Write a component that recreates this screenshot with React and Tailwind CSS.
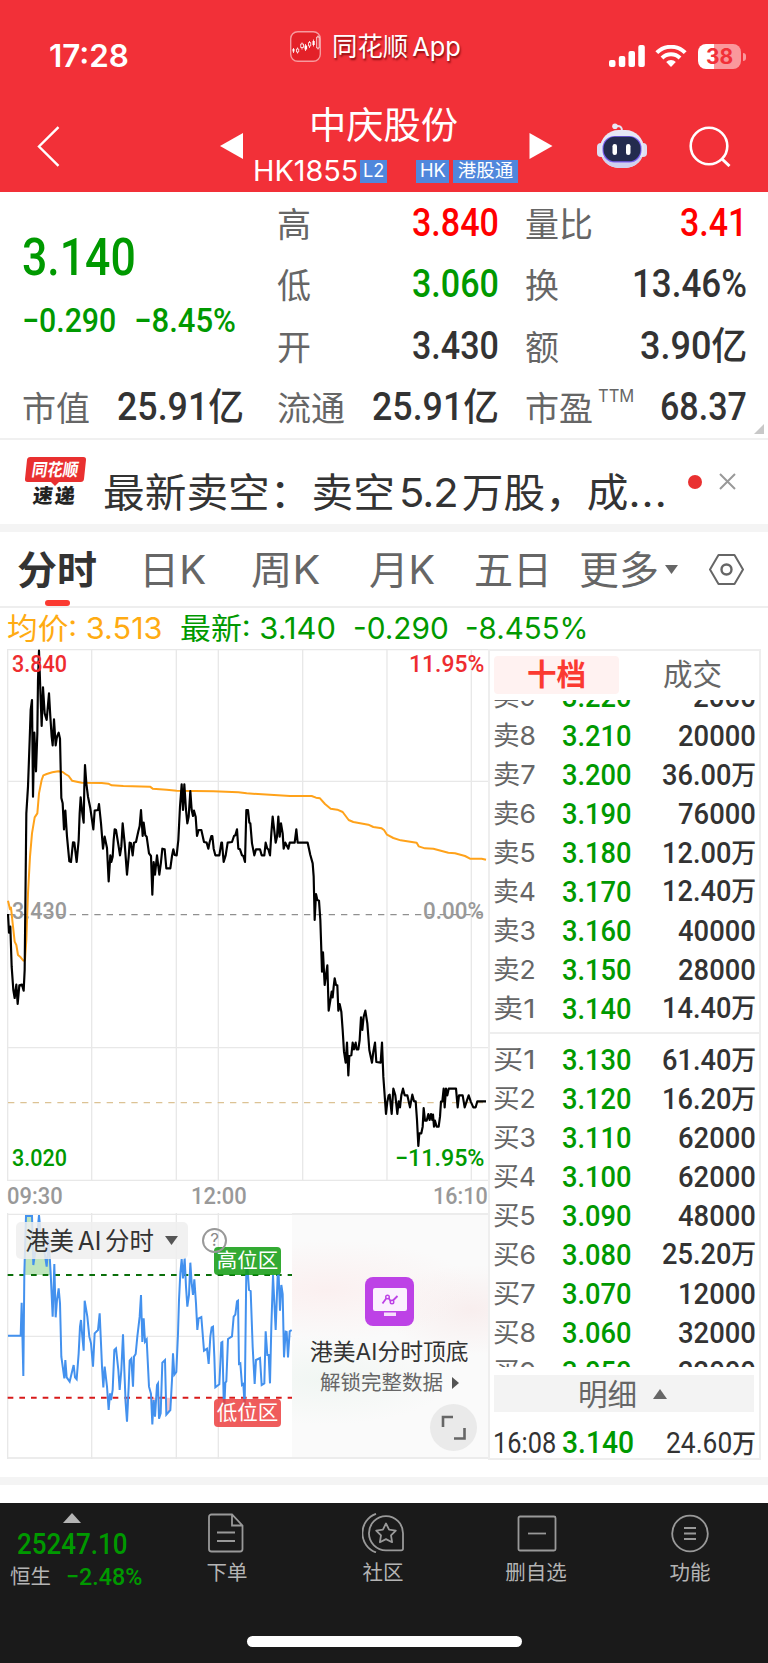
import { useLayoutEffect, useRef, useState } from 'react';

const NUM = "font-['Roboto','Noto_Sans_CJK_SC',sans-serif]";
const UI = "font-['Inter','Noto_Sans_CJK_SC',sans-serif]";

/* One line of text condensed or widened to the width of its box. */
function Fit({ className = '', children }) {
  const box = useRef(null);
  const text = useRef(null);
  const [scale, setScale] = useState(1);
  useLayoutEffect(() => {
    setScale(box.current.clientWidth / text.current.offsetWidth);
  }, [children]);
  return (
    <span ref={box} className={`block shrink-0 whitespace-nowrap ${className}`}>
      <span ref={text} className="inline-block origin-left" style={{ transform: `scaleX(${scale})` }}>
        {children}
      </span>
    </span>
  );
}

const PRICE =
  '24,822 27,878 31,860 35,980 40,1050 44,1074 49,1034 53,1092 58,1036 66,1034 71,1052 74,990 76,800 79,520 84,440 89,300 92,210 96,180 99,470 103,278 108,394 112,280 114,120 117,32 121,150 125,258 129,142 134,220 140,240 147,160 151,230 155,290 158,316 162,238 167,316 171,290 176,278 180,296 184,474 188,490 192,568 196,512 201,590 208,664 213,666 219,607 223,608 230,666 236,600 239,520 242,472 247,520 251,548 253,440 255,375 259,430 264,470 271,505 280,568 284,512 294,510 297,492 303,550 309,626 314,590 321,624 326,724 331,646 334,666 338,650 341,600 344,568 348,570 356,620 360,646 364,620 368,550 374,610 381,704 386,650 389,608 393,610 398,646 402,608 408,606 415,574 419,558 423,510 428,588 431,548 436,586 440,590 447,640 453,648 457,764 461,666 465,704 471,646 478,704 483,666 487,626 494,628 499,685 511,685 516,648 520,628 524,645 530,646 535,600 540,500 545,433 549,510 553,433 558,510 562,550 566,530 571,453 575,510 579,528 582,512 587,530 591,588 596,570 604,570 612,606 620,608 625,626 629,606 634,588 637,588 641,626 646,646 658,646 664,608 666,608 671,666 677,646 683,608 696,606 702,588 706,586 711,568 715,626 720,628 726,646 730,648 735,666 739,510 744,510 748,548 751,550 756,610 763,646 768,628 780,628 785,646 793,646 797,608 802,626 805,628 810,646 814,580 818,530 827,608 831,590 835,530 839,590 843,550 848,580 851,626 856,608 865,626 869,608 884,608 889,568 893,608 923,608 931,645 938,670 941,710 944,840 948,762 952,780 957,782 961,840 963,900 966,995 969,937 974,1035 978,1005 982,976 986,1112 992,1075 995,1055 998,1072 1001,1040 1004,1015 1008,1035 1012,1036 1015,1112 1019,1092 1024,1115 1028,1170 1032,1235 1037,1268 1041,1208 1045,1306 1048,1248 1054,1246 1058,1208 1062,1228 1067,1208 1070,1228 1075,1228 1079,1200 1083,1132 1087,1170 1091,1130 1096,1112 1102,1150 1108,1230 1116,1268 1120,1235 1125,1208 1129,1266 1142,1268 1146,1208 1150,1310 1158,1422 1162,1385 1166,1366 1169,1364 1175,1422 1180,1346 1186,1366 1192,1422 1196,1384 1200,1402 1204,1366 1209,1346 1214,1366 1222,1366 1230,1402 1237,1364 1242,1384 1247,1384 1251,1440 1255,1518 1258,1480 1264,1480 1268,1460 1271,1404 1275,1442 1280,1442 1285,1422 1289,1440 1293,1422 1297,1440 1299,1424 1302,1460 1305,1442 1310,1460 1316,1460 1320,1430 1323,1385 1327,1384 1331,1346 1334,1402 1338,1346 1342,1366 1346,1346 1368,1346 1373,1402 1377,1366 1388,1366 1394,1402 1400,1384 1406,1366 1412,1384 1420,1402 1427,1402 1432,1384 1458,1384';

const AVERAGE =
  '24,782 30,808 33,803 38,850 44,905 49,915 54,945 62,952 70,962 75,960 79,900 84,760 90,650 96,580 104,532 112,520 117,460 125,420 130,406 140,402 157,397 175,394 188,396 196,402 206,408 216,422 245,428 305,429 325,431 335,436 370,438 450,440 458,446 500,449 530,452 640,454 715,457 740,460 870,468 935,468 948,473 960,475 975,492 992,506 1012,509 1028,516 1046,540 1060,546 1105,554 1120,561 1145,565 1152,570 1161,584 1180,594 1202,601 1250,608 1256,619 1275,625 1300,626 1345,638 1365,640 1395,648 1410,656 1445,656 1458,659';

const AI =
  '24,587 62,587 65,488 70,708 73,400 78,228 96,228 100,375 108,320 112,280 117,225 122,280 128,300 134,340 140,380 146,295 152,400 158,530 163,372 167,532 171,480 176,445 180,490 184,650 193,715 196,660 200,712 209,725 215,700 221,675 225,712 230,718 236,640 240,560 243,540 247,590 251,632 254,482 262,530 268,590 273,610 279,680 284,580 294,570 299,520 303,610 306,680 310,742 314,680 321,740 326,810 330,760 333,780 338,750 343,630 348,625 355,690 359,750 364,690 369,583 373,690 377,790 381,845 386,740 389,662 394,656 399,740 402,650 407,642 412,590 419,530 423,465 427,606 431,535 435,605 440,598 447,740 453,762 457,853 461,780 465,830 471,735 474,730 477,836 482,820 487,668 495,660 499,824 511,810 516,720 519,640 523,704 529,696 534,580 537,480 541,400 545,357 549,415 554,355 558,440 562,500 567,465 571,368 575,430 579,465 583,418 588,490 592,570 596,535 604,531 612,632 621,626 626,672 631,590 635,562 639,560 643,650 646,742 658,733 664,608 667,606 671,775 673,800 676,728 679,724 684,597 696,589 701,530 706,524 711,484 714,482 717,672 721,670 726,735 730,732 734,800 739,385 742,375 747,450 752,453 758,620 764,732 768,660 780,654 785,735 793,730 797,574 802,645 806,645 810,730 814,560 819,405 827,570 833,405 836,405 840,512 844,435 848,462 852,652 857,575 860,576 864,652 869,574 875,570';

const GRID_X = [275, 529, 655, 908, 1161, 1414];

const SELL = [
  ['卖8', '3.210', '20000'],
  ['卖7', '3.200', '36.00万'],
  ['卖6', '3.190', '76000'],
  ['卖5', '3.180', '12.00万'],
  ['卖4', '3.170', '12.40万'],
  ['卖3', '3.160', '40000'],
  ['卖2', '3.150', '28000'],
  ['卖1', '3.140', '14.40万'],
];
const BUY = [
  ['买1', '3.130', '61.40万'],
  ['买2', '3.120', '16.20万'],
  ['买3', '3.110', '62000'],
  ['买4', '3.100', '62000'],
  ['买5', '3.090', '48000'],
  ['买6', '3.080', '25.20万'],
  ['买7', '3.070', '12000'],
  ['买8', '3.060', '32000'],
  ['买9', '3.050', '22000'],
];

function StatusBar() {
  return (
    <div className="flex h-[100px] items-start">
      <Fit className={`${UI} ml-[49px] mt-[38px] w-[80px] text-[31px] font-semibold leading-[36px]`}>17:28</Fit>
      <svg className="ml-[161px] mt-[31px] h-[31px] w-[31px] shrink-0" viewBox="0 0 31 31" fill="none">
        <rect x=".7" y=".7" width="29.6" height="29.6" rx="7" fill="#e32128" stroke="#f79a9e" strokeWidth="1.4" />
        <path d="M3.500 17v5M7.500 16.500v6M12 11.500v7M15.500 13v7M19.500 10v7M23.500 8.500v7M28 4.500v14" stroke="#fff" strokeWidth=".8" />
        <path d="M2.500 18h2v2.500h-2zM14.500 14.500h2.600v4h-2.600zM22.500 10h2.200v4h-2.200z" fill="#fff" />
        <path d="M6.500 18h2.200v3H6.500zM10.700 13h2.800v3.500h-2.800zM18.500 11.500h2.200V15h-2.200zM26.700 6h2.500v11h-2.500z" fill="#e32128" stroke="#fff" strokeWidth=".8" />
      </svg>
      <Fit className={`${UI} ml-[11px] mt-[29px] w-[129px] text-[26px] leading-[36px] [text-shadow:1px_2px_2px_rgba(90,0,0,.7)]`}>
        同花顺<span className="ml-[4px]">App</span>
      </Fit>
      <svg className="ml-[148px] mt-[45px] h-[22px] w-[36px] shrink-0" viewBox="0 0 36 22" fill="#fff">
        <rect x="0" y="15" width="6.500" height="7" rx="2" />
        <rect x="9.800" y="11" width="6.500" height="11" rx="2" />
        <rect x="19.500" y="6" width="6.500" height="16" rx="2" />
        <rect x="29.300" y="0" width="6.500" height="22" rx="2" />
      </svg>
      <svg className="ml-[10px] mt-[45px] h-[22px] w-[32px] shrink-0" viewBox="0 0 32 22" fill="none" stroke="#fff" strokeWidth="4">
        <path d="M1.800 7.700a20 20 0 0 1 28.400 0" />
        <path d="M7 13a12.700 12.700 0 0 1 18 0" />
        <path d="M16 22l-4.800-5a6.600 6.600 0 0 1 9.600 0z" fill="#fff" stroke="none" />
      </svg>
      <div className="ml-[11px] mt-[44px] flex h-[25px] items-center">
        <div className={`${UI} flex h-[25px] w-[43px] items-center justify-center rounded-[8px] bg-[linear-gradient(90deg,#fff_38%,#fa989c_38%)] text-[21px] font-bold text-[#f23038]`}>
          38
        </div>
        <div className="ml-[2px] h-[8px] w-[2.500px] rounded-r-full bg-[#fa989c]" />
      </div>
    </div>
  );
}

function Robot() {
  return (
    <svg className="h-[46px] w-[50px] shrink-0" viewBox="0 0 50 46">
      <path d="M25 8c0-4-2-5.500-6-5" stroke="#e4e4f4" strokeWidth="2" fill="none" />
      <circle cx="18" cy="3.200" r="2.800" fill="#e9e9f7" />
      <rect x="0" y="20" width="8" height="14" rx="4" fill="#dddff3" />
      <rect x="42" y="20" width="8" height="14" rx="4" fill="#dddff3" />
      <rect x="3" y="7" width="44" height="38" rx="18.500" fill="#e6e7f6" />
      <path d="M5 34c4 8.500 11 11 20 11s16-2.500 20-11z" fill="#cfd1ee" />
      <rect x="5.500" y="13" width="39" height="26.500" rx="12" fill="#7a5ff0" />
      <rect x="6.500" y="13.800" width="37" height="24.500" rx="11.500" fill="#232b4e" />
      <rect x="15.500" y="21" width="4.500" height="11" rx="2.200" fill="#fff" />
      <rect x="29" y="21" width="4.500" height="11" rx="2.200" fill="#fff" />
    </svg>
  );
}

function TitleBar() {
  return (
    <div className="flex h-[92px] items-start">
      <svg className="ml-[37px] mt-[26px] h-[41px] w-[23px] shrink-0" viewBox="0 0 23 41" fill="none" stroke="#fff" strokeWidth="2.400">
        <path d="M21.500 1.200 2 20.500 21.500 39.800" />
      </svg>
      <svg className="ml-[160px] mt-[33px] h-[26px] w-[24px] shrink-0" viewBox="0 0 24 26" fill="#fff">
        <path d="M0 13 23 0v26z" />
      </svg>
      <div className="ml-[9px] mt-[3px] w-[266px]">
        <div className="pl-[56px]">
          <Fit className={`${UI} w-[149px] text-[37px] leading-[46px]`}>中庆股份</Fit>
        </div>
        <div className="mt-[9px] flex h-[26px] items-center">
          <Fit className={`${UI} w-[105px] text-[28px] leading-[26px]`}>HK1855</Fit>
          <span className={`${UI} ml-[2px] flex h-[23px] w-[27px] items-center justify-center bg-[#5087dc] text-[19px]`}>
            <Fit className="w-[21px]">L2</Fit>
          </span>
          <span className={`${UI} ml-[29px] flex h-[23px] w-[33px] items-center justify-center bg-[#5087dc] text-[19px]`}>
            <Fit className="w-[26px]">HK</Fit>
          </span>
          <span className={`${UI} ml-[4px] flex h-[23px] w-[65px] shrink-0 items-center justify-center bg-[#5087dc] text-[18.500px]`}>港股通</span>
        </div>
      </div>
      <svg className="ml-[10px] mt-[33px] h-[26px] w-[24px] shrink-0" viewBox="0 0 24 26" fill="#fff">
        <path d="M23.500 13 .5 0v26z" />
      </svg>
      <div className="ml-[44px] mt-[23px]">
        <Robot />
      </div>
      <svg className="ml-[42px] mt-[25px] h-[42px] w-[42px] shrink-0" viewBox="0 0 42 42" fill="none" stroke="#fff" strokeWidth="2.600">
        <circle cx="20" cy="21" r="18.300" />
        <path d="M33 34 40.500 41" strokeWidth="3" />
      </svg>
    </div>
  );
}

function Label({ children }) {
  return <span className={`${UI} text-[34px] leading-[50px] text-[#666]`}>{children}</span>;
}

function Stat({ label, value, className = 'text-[#333]', width, note }) {
  return (
    <div className="flex h-[61.300px] items-start justify-between">
      <div className="flex items-start">
        <Label>{label}</Label>
        {note && <Fit className="ml-[5px] w-[36px] font-['Inter'] text-[17px] leading-[24px] text-[#666]">{note}</Fit>}
      </div>
      <Fit className={`${NUM} ${width} ${className} -mt-[2px] text-[38px] font-medium leading-[50px]`}>{value}</Fit>
    </div>
  );
}

function Quote() {
  return (
    <section className="relative flex h-[248px] shrink-0 border-b-2 border-[#f0f0f0] pl-[22px] pt-[8px]">
      <div className="w-[222px] shrink-0">
        <Fit className={`${NUM} mt-[30px] w-[114px] text-[52px] font-medium leading-[56px] text-[#090]`}>3.140</Fit>
        <div className="mt-[11px] flex h-[79px] gap-[18px] pt-[2px] text-[#090]">
          <Fit className={`${NUM} w-[94px] text-[33.500px] font-medium leading-[44px]`}>−0.290</Fit>
          <Fit className={`${NUM} w-[102px] text-[33.500px] font-medium leading-[44px]`}>−8.45%</Fit>
        </div>
        <div className="pt-[8px]">
          <Stat label="市值" value="25.91亿" width="w-[127px]" />
        </div>
      </div>
      <div className="ml-[33px] w-[222px] shrink-0">
        <Stat label="高" value="3.840" width="w-[87px]" className="text-[#f00]" />
        <Stat label="低" value="3.060" width="w-[87px]" className="text-[#090]" />
        <Stat label="开" value="3.430" width="w-[87px]" />
        <Stat label="流通" value="25.91亿" width="w-[127px]" />
      </div>
      <div className="ml-[26px] w-[222px] shrink-0">
        <Stat label="量比" value="3.41" width="w-[67px]" className="text-[#f00]" />
        <Stat label="换" value="13.46%" width="w-[115px]" />
        <Stat label="额" value="3.90亿" width="w-[107px]" />
        <Stat label="市盈" value="68.37" width="w-[87px]" note="TTM" />
      </div>
      <svg className="absolute bottom-[4px] right-[4px] h-[10px] w-[10px]" viewBox="0 0 10 10" fill="#c8c8c8">
        <path d="M10 0v10H0z" />
      </svg>
    </section>
  );
}

function News() {
  return (
    <section className="flex h-[92px] shrink-0 border-b-8 border-[#f4f4f4] pl-[25px]">
      <div className="w-[62px] pt-[17px]">
        <div className="ml-[1px] flex h-[25px] w-[59px] -skew-x-6 items-center justify-center rounded-[3px] bg-[#e93030]">
          <Fit className={`${UI} w-[47px] -skew-x-3 text-[17.500px] font-bold leading-[24px] text-white`}>同花顺</Fit>
        </div>
        <svg className="ml-[26px] block h-[4px] w-[8px]" viewBox="0 0 8 4" fill="#e93030">
          <path d="M0 0h8L4 4z" />
        </svg>
        <Fit className={`${UI} ml-[8px] w-[44px] -skew-x-6 text-[20px] font-black leading-[20px] tracking-[2px] text-[#222]`}>速递</Fit>
      </div>
      <Fit className={`${UI} ml-[16px] mt-[25px] w-[565px] text-[40px] leading-[56px] text-[#333]`}>
        最新卖空：卖空<span className="mx-[4px] tracking-[-1px]">5.2</span>万股，成<span className="tracking-[1px]">...</span>
      </Fit>
      <span className="ml-[20px] mt-[35px] h-[14px] w-[14px] rounded-full bg-[#e93030]" />
      <svg className="ml-[17px] mt-[33px] h-[17px] w-[17px]" viewBox="0 0 17 17" stroke="#999" strokeWidth="2">
        <path d="M1 1l15 15M16 1 1 16" />
      </svg>
    </section>
  );
}

function ChartTabs() {
  return (
    <section className={`${UI} relative flex h-[76px] shrink-0 border-b-2 border-[#eee] pl-[17px] pt-[10px] text-[39px] leading-[56px] text-[#666]`}>
      <Fit className="w-[80px] font-bold text-[#333]">分时</Fit>
      <Fit className="ml-[42px] w-[67px]">日K</Fit>
      <Fit className="ml-[45px] w-[69px]">周K</Fit>
      <Fit className="ml-[49px] w-[66px]">月K</Fit>
      <Fit className="ml-[39px] w-[78px]">五日</Fit>
      <Fit className="ml-[27px] w-[80px]">更多</Fit>
      <svg className="ml-[6px] mt-[23px] h-[9px] w-[13px]" viewBox="0 0 13 9" fill="#666">
        <path d="M0 0h13L6.500 9z" />
      </svg>
      <svg className="ml-[31px] mt-[12px] h-[31px] w-[35px]" viewBox="0 0 35 31" fill="none" stroke="#666" strokeWidth="2">
        <path d="M9.500 1h16L34 15.500 25.500 30h-16L1 15.500z" strokeLinejoin="round" />
        <circle cx="17.500" cy="15.500" r="5" strokeWidth="2.400" />
      </svg>
      <span className="absolute bottom-0 left-[45px] h-[6px] w-[25px] rounded-[3px] bg-[#fb3a31]" />
    </section>
  );
}

function PriceChart() {
  return (
    <div className={`${NUM} relative h-[532px] text-[23.500px] font-medium leading-[26px]`}>
      <svg className="block h-[532px] w-[481px]" viewBox="21 27 1443 1596" fill="none">
        <g stroke="#e8e8e8" strokeWidth="4">
          <path d="M23 28.500H1464M23 424H1464M23 1223H1464M23 1621H1464M23 27V1623" />
          {GRID_X.map((x) => (
            <path key={x} d={`M${x} 27V1623`} />
          ))}
        </g>
        <path d="M24 824H1464" stroke="#909090" strokeWidth="4" strokeDasharray="19 18" />
        <path d="M24 1388H1464" stroke="#dcc294" strokeWidth="4" strokeDasharray="19 18" />
      </svg>
      <span className="absolute left-[5px] top-[249px] text-[#999]"><Fit className="w-[55px]">3.430</Fit></span>
      <span className="absolute right-[4px] top-[249px] text-[#999]"><Fit className="w-[61px]">0.00%</Fit></span>
      <svg className="absolute left-0 top-0 h-[532px] w-[481px]" viewBox="21 27 1443 1596" fill="none" strokeLinejoin="round">
        <polyline points={AVERAGE} stroke="#ffa21a" strokeWidth="6" />
        <polyline points={PRICE} stroke="#000" strokeWidth="6.500" />
      </svg>
      <span className="absolute left-[5px] top-[2px] text-[#ee2c30]"><Fit className="w-[55px]">3.840</Fit></span>
      <span className="absolute right-[4px] top-[2px] text-[#ee2c30]"><Fit className="w-[75px]">11.95%</Fit></span>
      <span className="absolute left-[5px] top-[496px] text-[#090]"><Fit className="w-[55px]">3.020</Fit></span>
      <span className="absolute right-[4px] top-[496px] text-[#090]"><Fit className="w-[89px]">−11.95%</Fit></span>
    </div>
  );
}

function AiChart() {
  return (
    <div className="relative flex h-[246px] border-b-2 border-[#ececec]">
      <svg className="block h-[246px] w-[285px] shrink-0" viewBox="21 219 855 738" fill="none">
        <g stroke="#e8e8e8" strokeWidth="4">
          <path d="M23 223H876M23 589H876M23 219V957M275 219V957M529 219V957M655 219V957" />
        </g>
        <path d="M73 405 78 228 96 228 100 375 112 280 117 225 122 280 140 380 146 295 152 405z" fill="#bfe5bd" />
        <path d="M373 773l8 72 6-72zM453 773l4 80 4-73 4 50 3-57zM474 773l3 63 5-16 3-47zM497 773l2 51 12-14 4-37z" fill="#f9c4c6" />
        <path d="M23 405H876" stroke="#0b6f0b" strokeWidth="6" strokeDasharray="17 18" />
        <path d="M23 773H876" stroke="#d81a1a" strokeWidth="6" strokeDasharray="17 18" />
        <polyline points={AI} stroke="#4391ee" strokeWidth="6" />
      </svg>
      <div className={`${UI} absolute left-[9px] top-[9px] flex h-[37px] w-[172px] items-center rounded-[5px] bg-[#eeeeee]/85 pl-[9px] text-[25px] leading-[36px] text-[#333]`}>
        <Fit className="w-[129px]">港美<span className="mx-[4px]">AI</span>分时</Fit>
        <svg className="ml-[11px] h-[9px] w-[13px]" viewBox="0 0 13 9" fill="#555">
          <path d="M0 0h13L6.500 9z" />
        </svg>
      </div>
      <span className={`${UI} absolute left-[207px] top-[34px] flex h-[28px] w-[67px] items-center justify-center rounded-[4px] bg-[#0f9b0f]/85 text-[20.500px] text-white`}>高位区</span>
      <span className={`${UI} absolute left-[207px] top-[186px] flex h-[28px] w-[67px] items-center justify-center rounded-[4px] bg-[#ec4040]/85 text-[20.500px] text-white`}>低位区</span>
      <span className={`${UI} absolute left-[195px] top-[15px] flex h-[25px] w-[25px] items-center justify-center rounded-full border-2 border-[#999] text-[17px] leading-none text-[#888]`}>?</span>
      <div className="flex grow flex-col items-center border-t-2 border-[#ececec] bg-[#fafafa] bg-[radial-gradient(ellipse_150px_50px_at_35px_75px,#fbf0f0,transparent),radial-gradient(ellipse_90px_45px_at_180px_95px,#f8eeee,transparent),radial-gradient(ellipse_130px_45px_at_30px_165px,#f1f6f3,transparent)] pr-[1px] pt-[62px]">
        <svg className="h-[49px] w-[49px]" viewBox="0 0 49 49" fill="none">
          <rect width="49" height="49" rx="8" fill="#bd42e6" />
          <rect x="8" y="11" width="34" height="23" rx="2" fill="#fbf1fe" />
          <rect x="19" y="35.500" width="12" height="3.500" fill="#f5dffb" />
          <path d="M17.500 26.500 21.500 21M23.500 21l2.500 3.500M28 23.500l4.500-4.500" stroke="#bd42e6" strokeWidth="1.800" />
          <circle cx="22.500" cy="20" r="1.800" stroke="#bd42e6" strokeWidth="1.400" />
          <circle cx="27" cy="25" r="1.800" stroke="#bd42e6" strokeWidth="1.400" />
        </svg>
        <Fit className={`${UI} mt-[9px] w-[159px] text-[22.500px] leading-[34px] text-[#333]`}>港美AI分时顶底</Fit>
        <div className="mt-[-2px] flex w-[139px] items-center">
          <Fit className={`${UI} w-[123px] text-[20.500px] leading-[32px] text-[#666]`}>解锁完整数据</Fit>
          <svg className="ml-[9px] h-[12px] w-[7px]" viewBox="0 0 7 12" fill="#555">
            <path d="M0 0l7 6-7 6z" />
          </svg>
        </div>
      </div>
      <span className="absolute left-[423px] top-[191px] flex h-[47px] w-[47px] items-center justify-center rounded-full bg-[#eaeaea]">
        <svg className="h-[25px] w-[25px]" viewBox="0 0 25 25" fill="none" stroke="#666" strokeWidth="2.600">
          <path d="M12 2H2v10M13 23.500h10.500V13" />
        </svg>
      </span>
    </div>
  );
}

function Level({ row }) {
  const [name, price, volume] = row;
  const wide = volume.endsWith('万');
  const width = wide ? 'w-[94px]' : volume.length < 5 ? 'w-[63px]' : 'w-[78px]';
  return (
    <div className="flex h-[38.900px] shrink-0 items-center">
      <Fit className={`${UI} w-[43px] text-[26px] leading-[38px] text-[#666]`}>{name}</Fit>
      <Fit className={`${NUM} ml-[26px] w-[70px] text-[30px] font-medium leading-[38px] text-[#090]`}>{price}</Fit>
      <div className="flex grow justify-end">
        <Fit className={`${NUM} text-[29.500px] leading-[38px] text-[#333] ${width}`}>
          <span className="font-medium">{volume.replace('万', '')}</span>
          {wide && <span className="text-[27px] font-medium">万</span>}
        </Fit>
      </div>
    </div>
  );
}

function OrderBook() {
  return (
    <div className="flex h-[811px] w-[273px] shrink-0 flex-col border-2 border-[#eee]">
      <div className={`${UI} flex h-[49px] shrink-0 pl-[4px] pt-[5px] text-[29.500px] leading-[37px]`}>
        <span className="h-[38px] w-[125px] shrink-0 rounded-[4px] bg-[#fff2f1] text-center font-bold text-[#fb3a31]">十档</span>
        <span className="ml-[44px] shrink-0 text-[#666]">成交</span>
      </div>
      <div className="flex h-[334px] shrink-0 flex-col justify-end overflow-hidden border-b-2 border-[#eee] pb-[4px] pl-[3px] pr-[3px]">
        <Level row={['卖9', '3.220', '2000']} />
        {SELL.map((row) => (
          <Level key={row[0]} row={row} />
        ))}
      </div>
      <div className="h-[333px] shrink-0 overflow-hidden pl-[3px] pr-[3px] pt-[7px]">
        {BUY.map((row) => (
          <Level key={row[0]} row={row} />
        ))}
      </div>
      <div className={`${UI} ml-[4px] mt-[8px] flex h-[37px] w-[260px] shrink-0 items-center bg-[#f3f3f3] pl-[84px] text-[29.500px] text-[#666]`}>
        <span className="pt-[1px] leading-[36px]">明细</span>
        <svg className="ml-[16px] h-[10px] w-[14px]" viewBox="0 0 14 10" fill="#666">
          <path d="M7 0l7 10H0z" />
        </svg>
      </div>
      <div className="ml-[3px] mt-[15px] flex h-[32px] w-[263px] shrink-0 items-center">
        <Fit className={`${NUM} w-[63px] text-[29px] font-[450] leading-[34px] text-[#333]`}>16:08</Fit>
        <Fit className={`${NUM} ml-[6px] w-[72px] text-[31px] font-medium leading-[34px] text-[#090]`}>3.140</Fit>
        <Fit className={`${NUM} ml-auto w-[90px] text-[29px] font-[450] leading-[34px] text-[#333]`}>
          24.60<span className="text-[26px]">万</span>
        </Fit>
      </div>
    </div>
  );
}

function Tool({ icon, label, className }) {
  return (
    <div className={`flex flex-col items-center ${className}`}>
      {icon}
      <span className={`${UI} mt-[5px] text-[20.500px] leading-[30px] text-[#b4b4b4]`}>{label}</span>
    </div>
  );
}

function BottomBar() {
  const icon = 'h-[40px] w-[42px]';
  return (
    <section className="flex h-[160px] shrink-0 flex-col items-center bg-[#1a1a1a]">
      <div className="flex h-[133px] w-full">
        <div className="w-[150px] pt-[10px]">
          <svg className="ml-[63px] block h-[10px] w-[18px]" viewBox="0 0 18 10" fill="#b4b4b4">
            <path d="M9 0l9 10H0z" />
          </svg>
          <Fit className={`${NUM} ml-[17px] mt-[5px] w-[111px] text-[29.500px] font-medium leading-[32px] text-[#090]`}>25247.10</Fit>
          <div className="flex items-center">
            <Fit className={`${UI} ml-[10px] w-[41px] text-[20.500px] leading-[34px] text-[#b4b4b4]`}>恒生</Fit>
            <Fit className={`${NUM} ml-[15px] w-[76px] text-[24.500px] font-medium leading-[34px] text-[#090]`}>−2.48%</Fit>
          </div>
        </div>
        <Tool
          label="下单"
          className="ml-[27px] w-[100px] pt-[10px]"
          icon={
            <svg className={icon} viewBox="0 0 42 40" fill="none" stroke="#999" strokeWidth="1.800">
              <path d="M5.500 1.500h20.500l10.500 11v23.500a2.500 2.500 0 0 1-2.500 2.500H5.500a2.500 2.500 0 0 1-2.500-2.500V4a2.500 2.500 0 0 1 2.500-2.500zM26 1.500v11h10.500M11 19.500h18M11 28h18" />
            </svg>
          }
        />
        <Tool
          label="社区"
          className="ml-[56px] w-[100px] pt-[10px]"
          icon={
            <svg className={icon} viewBox="0 0 42 40" fill="none" stroke="#999" strokeWidth="1.800">
              <path d="M24 3.200a17 17 0 0 1 17 17V35.500a1.800 1.800 0 0 1-1.800 1.800H24a17 17 0 0 1 0-34.100z" />
              <path d="M14 .8a20.500 20.500 0 0 0 0 38.600" />
              <path d="M24 10.500l3.100 6.100 6.700 1-4.800 4.800 1.100 6.800-6.100-3.100-6.100 3.100 1.100-6.800-4.800-4.800 6.700-1z" strokeLinejoin="round" />
            </svg>
          }
        />
        <Tool
          label="删自选"
          className="ml-[53px] w-[100px] pt-[10px]"
          icon={
            <svg className={icon} viewBox="0 0 42 40" fill="none" stroke="#999" strokeWidth="1.800">
              <rect x="3.500" y="3.500" width="37" height="34" rx="1.500" />
              <path d="M13 20.500h18" />
            </svg>
          }
        />
        <Tool
          label="功能"
          className="ml-[54px] w-[100px] pt-[10px]"
          icon={
            <svg className={icon} viewBox="0 0 42 40" fill="none" stroke="#999" strokeWidth="1.800">
              <circle cx="21" cy="20.500" r="17.800" />
              <path d="M15 15h12M15 20.500h12M15 26h12" />
            </svg>
          }
        />
      </div>
      <div className="h-[11px] w-[275px] rounded-full bg-white" />
    </section>
  );
}

export default function App() {
  return (
    <div className="flex h-[1663px] w-[768px] flex-col overflow-hidden bg-white">
      <header className="h-[192px] shrink-0 bg-[#f23038] text-white">
        <StatusBar />
        <TitleBar />
      </header>
      <Quote />
      <News />
      <ChartTabs />
      <div className={`${UI} flex h-[41px] shrink-0 pl-[7px] text-[29.500px] leading-[40px] text-[#090]`}>
        <Fit className="w-[156px] text-[#ffab12]">均价: 3.513</Fit>
        <Fit className="ml-[17px] w-[156px]">最新: 3.140</Fit>
        <Fit className="ml-[17px] w-[96px]">-0.290</Fit>
        <Fit className="ml-[16px] w-[124px]">-8.455%</Fit>
      </div>
      <main className="flex h-[828px] shrink-0 pl-[7px]">
        <div className="w-[481px] shrink-0">
          <PriceChart />
          <div className={`${NUM} flex h-[32px] text-[23.500px] font-medium leading-[31px] text-[#999]`}>
            <Fit className="w-[56px]">09:30</Fit>
            <Fit className="ml-[128px] w-[56px]">12:00</Fit>
            <Fit className="ml-auto w-[55px]">16:10</Fit>
          </div>
          <AiChart />
        </div>
        <OrderBook />
      </main>
      <div className="h-[8px] shrink-0 bg-[#f4f4f4]" />
      <div className="h-[18px] shrink-0" />
      <BottomBar />
    </div>
  );
}
